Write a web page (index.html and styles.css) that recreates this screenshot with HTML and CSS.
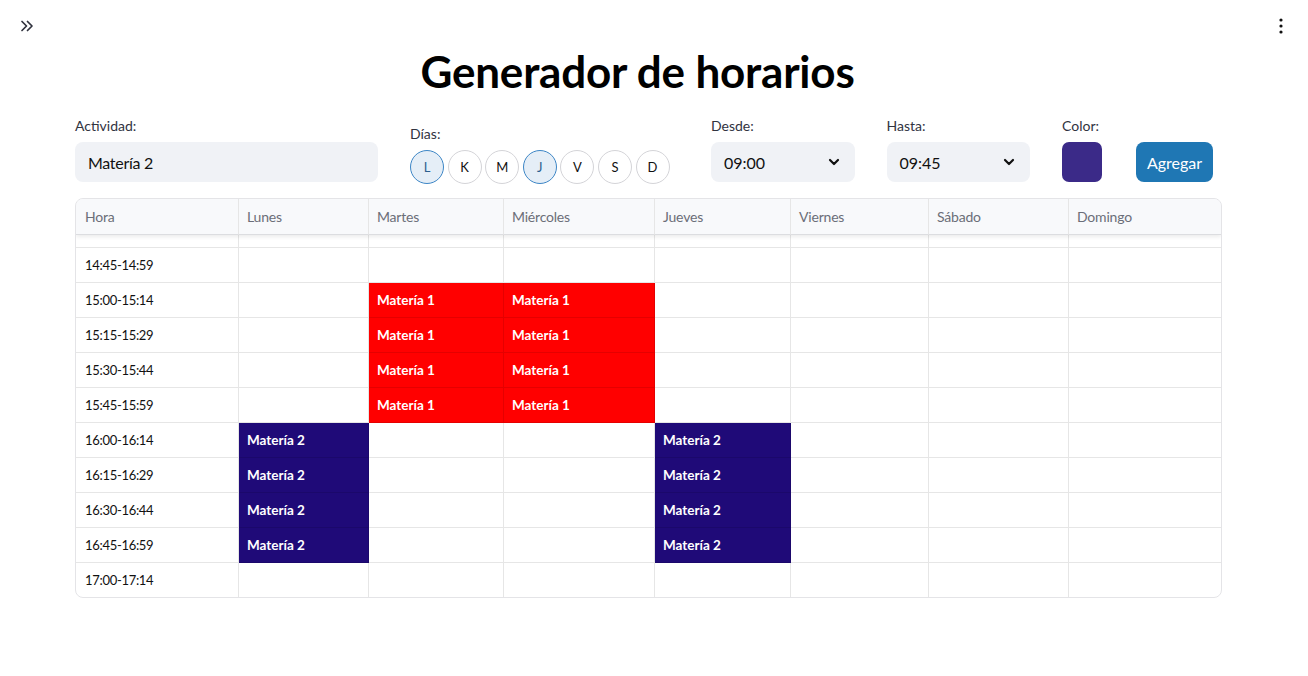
FILE: index.html
```html
<!DOCTYPE html>
<html lang="es">
<head>
<meta charset="utf-8">
<title>Generador de horarios</title>
<link rel="stylesheet" href="styles.css">
</head>
<body>
<header class="topbar">
  <button class="icon-btn" aria-label="Abrir barra lateral">
    <svg width="16" height="16" viewBox="0 0 16 16" fill="none" stroke="#31333f" stroke-width="1.7" stroke-linecap="round" stroke-linejoin="round"><path d="M3 3.5 7.5 8 3 12.5"/><path d="M8.5 3.5 13 8 8.5 12.5"/></svg>
  </button>
  <button class="icon-btn" aria-label="Menú">
    <svg width="6" height="16" viewBox="0 0 6 16" fill="#111"><circle cx="3" cy="2" r="1.6"/><circle cx="3" cy="8" r="1.6"/><circle cx="3" cy="14" r="1.6"/></svg>
  </button>
</header>

<main class="main">
  <h1 class="title">Generador de horarios</h1>

  <section class="form">
    <div class="field f-act">
      <label class="lbl">Actividad:</label>
      <div class="input">Matería 2</div>
    </div>
    <div class="field f-days">
      <label class="lbl">Días:</label>
      <div class="pills">
        <span class="pill on">L</span>
        <span class="pill">K</span>
        <span class="pill">M</span>
        <span class="pill on">J</span>
        <span class="pill">V</span>
        <span class="pill">S</span>
        <span class="pill">D</span>
      </div>
    </div>
    <div class="field f-sel">
      <label class="lbl">Desde:</label>
      <div class="select"><span>09:00</span>
        <svg width="12" height="8" viewBox="0 0 12 8" fill="none" stroke="#111" stroke-width="2.2" stroke-linecap="round" stroke-linejoin="round"><path d="M2 2l4 4 4-4"/></svg>
      </div>
    </div>
    <div class="field f-sel">
      <label class="lbl">Hasta:</label>
      <div class="select"><span>09:45</span>
        <svg width="12" height="8" viewBox="0 0 12 8" fill="none" stroke="#111" stroke-width="2.2" stroke-linecap="round" stroke-linejoin="round"><path d="M2 2l4 4 4-4"/></svg>
      </div>
    </div>
    <div class="field f-color">
      <label class="lbl">Color:</label>
      <div class="swatch"></div>
    </div>
    <div class="field f-btn">
      <button class="btn">Agregar</button>
    </div>
  </section>

  <section class="table">
    <div class="row head">
      <div class="c">Hora</div><div class="c">Lunes</div><div class="c">Martes</div><div class="c">Miércoles</div><div class="c">Jueves</div><div class="c">Viernes</div><div class="c">Sábado</div><div class="c">Domingo</div>
    </div>
    <div class="row sliver">
      <div class="c"></div><div class="c"></div><div class="c"></div><div class="c"></div><div class="c"></div><div class="c"></div><div class="c"></div><div class="c"></div>
    </div>
    <div class="row">
      <div class="c">14:45-14:59</div><div class="c"></div><div class="c"></div><div class="c"></div><div class="c"></div><div class="c"></div><div class="c"></div><div class="c"></div>
    </div>
    <div class="row">
      <div class="c">15:00-15:14</div><div class="c"></div><div class="c red">Matería 1</div><div class="c red">Matería 1</div><div class="c"></div><div class="c"></div><div class="c"></div><div class="c"></div>
    </div>
    <div class="row">
      <div class="c">15:15-15:29</div><div class="c"></div><div class="c red">Matería 1</div><div class="c red">Matería 1</div><div class="c"></div><div class="c"></div><div class="c"></div><div class="c"></div>
    </div>
    <div class="row">
      <div class="c">15:30-15:44</div><div class="c"></div><div class="c red">Matería 1</div><div class="c red">Matería 1</div><div class="c"></div><div class="c"></div><div class="c"></div><div class="c"></div>
    </div>
    <div class="row">
      <div class="c">15:45-15:59</div><div class="c"></div><div class="c red">Matería 1</div><div class="c red">Matería 1</div><div class="c"></div><div class="c"></div><div class="c"></div><div class="c"></div>
    </div>
    <div class="row">
      <div class="c">16:00-16:14</div><div class="c navy">Matería 2</div><div class="c"></div><div class="c"></div><div class="c navy">Matería 2</div><div class="c"></div><div class="c"></div><div class="c"></div>
    </div>
    <div class="row">
      <div class="c">16:15-16:29</div><div class="c navy">Matería 2</div><div class="c"></div><div class="c"></div><div class="c navy">Matería 2</div><div class="c"></div><div class="c"></div><div class="c"></div>
    </div>
    <div class="row">
      <div class="c">16:30-16:44</div><div class="c navy">Matería 2</div><div class="c"></div><div class="c"></div><div class="c navy">Matería 2</div><div class="c"></div><div class="c"></div><div class="c"></div>
    </div>
    <div class="row">
      <div class="c">16:45-16:59</div><div class="c navy">Matería 2</div><div class="c"></div><div class="c"></div><div class="c navy">Matería 2</div><div class="c"></div><div class="c"></div><div class="c"></div>
    </div>
    <div class="row">
      <div class="c">17:00-17:14</div><div class="c"></div><div class="c"></div><div class="c"></div><div class="c"></div><div class="c"></div><div class="c"></div><div class="c"></div>
    </div>
  </section>
</main>
</body>
</html>
```

FILE: styles.css
```css
* { box-sizing: border-box; }

html, body {
  margin: 0;
  padding: 0;
  background: #ffffff;
  color: #31333f;
  font-family: Lato, "Noto Sans", sans-serif;
}

.topbar {
  display: flex;
  justify-content: space-between;
  align-items: center;
  padding: 17px 24px 0 19px;
  height: 34px;
}

.icon-btn {
  background: none;
  border: 0;
  padding: 0;
  display: flex;
  align-items: center;
  cursor: pointer;
}

.main {
  width: 1147px;
  margin-left: 75px;
}

.title {
  margin: 10px 0 0;
  padding-right: 22px;
  text-align: center;
  font-size: 44px;
  font-weight: 700;
  line-height: 54px;
  color: #000;
  letter-spacing: -0.2px;
}

.form {
  display: flex;
  align-items: flex-start;
  gap: 32px;
  margin-top: 20px;
}

.field {
  display: flex;
  flex-direction: column;
}

.lbl {
  font-size: 14px;
  line-height: 16px;
  height: 24px;
  color: #31333f;
}

.f-act { width: 303px; }
.f-days { width: 269px; padding-top: 8px; }
.f-days .lbl { height: 24px; }
.f-sel { width: 143.5px; }
.f-color { width: 42px; }
.f-btn { width: 77px; padding-top: 24px; }

.input, .select {
  height: 40px;
  background: #f0f2f6;
  border-radius: 8px;
  padding: 0 13px;
  display: flex;
  align-items: center;
  font-size: 16px;
  color: #111;
}

.input { letter-spacing: -0.3px; }

.select { justify-content: space-between; padding-right: 15px; }

.pills {
  display: flex;
  gap: 3.6px;
}

.pill {
  width: 34px;
  height: 34px;
  border: 1px solid #d4d4d8;
  border-radius: 50%;
  display: flex;
  align-items: center;
  justify-content: center;
  font-size: 13px;
  color: #111;
  background: #fff;
}

.pill.on {
  background: #e5eef7;
  border-color: #3d86c6;
  color: #2c5f8f;
}

.swatch {
  width: 40px;
  height: 40px;
  border-radius: 7px;
  background: #3b2a88;
}

.btn {
  height: 40px;
  width: 77px;
  border: 0;
  border-radius: 8px;
  background: #1f77b4;
  color: #fff;
  font-family: inherit;
  font-size: 16px;
  padding: 0;
}

.table {
  margin-top: 14px;
  border: 1px solid #e4e4e7;
  border-radius: 8px;
  overflow: hidden;
}

.row {
  display: grid;
  grid-template-columns: 163px 130px 135px 151px 136px 138px 140px 1fr;
  height: 35px;
}

.c {
  border-right: 1px solid #e6e6e6;
  border-bottom: 1px solid #e6e6e6;
  display: flex;
  align-items: center;
  padding-left: 9px;
  font-size: 13px;
  letter-spacing: -0.3px;
  color: #111;
}

.c:last-child { border-right: 0; }

.row:last-child { height: 34px; }
.row:last-child .c { border-bottom: 0; }

.row.head {
  height: 36px;
  background: #f8f9fb;
  box-shadow: 0 2px 4px rgba(0, 0, 0, 0.08);
  position: relative;
  z-index: 1;
}

.row.head .c {
  color: #6b6e78;
  font-size: 14px;
  letter-spacing: -0.2px;
  padding-left: 8px;
  border-bottom-color: #dcdde0;
}

.row.head .c:first-child { padding-left: 9px; }

.row.sliver { height: 13px; }

.c.red, .c.navy {
  color: #fff;
  font-weight: 700;
  font-size: 13.5px;
  letter-spacing: 0;
  padding-left: 8px;
  border-right-color: rgba(0, 0, 0, 0.1);
  border-bottom-color: rgba(0, 0, 0, 0.1);
}

.c.red { background: #ff0000; }
.c.navy { background: #1f0a78; }
```
